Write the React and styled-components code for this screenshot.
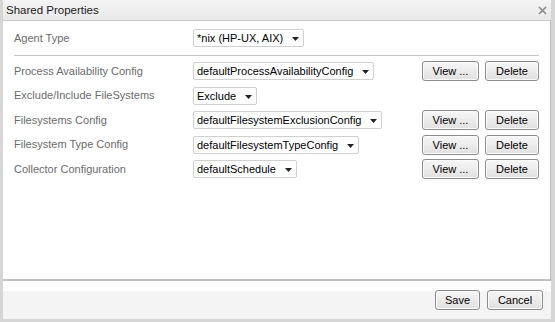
import styled, { createGlobalStyle } from 'styled-components'

const GlobalStyle = createGlobalStyle`
	html, body {
		margin: 0;
		padding: 0;
		background: #ffffff;
	}
	body {
		font-family: "Liberation Sans", Arial, sans-serif;
		font-size: 11px;
	}
`

const rows = [
	{ label: 'Process Availability Config', value: 'defaultProcessAvailabilityConfig', actions: true },
	{ label: 'Exclude/Include FileSystems', value: 'Exclude', actions: false },
	{ label: 'Filesystems Config', value: 'defaultFilesystemExclusionConfig', actions: true },
	{ label: 'Filesystem Type Config', value: 'defaultFilesystemTypeConfig', actions: true },
	{ label: 'Collector Configuration', value: 'defaultSchedule', actions: true },
]

function Combo({ value }) {
	return (
		<SelectBox>
			<span>{value}</span>
			<Arrow viewBox="0 0 7 4" width="7" height="4">
				<path d="M0 0 H7 L3.5 4 Z" fill="#222" />
			</Arrow>
		</SelectBox>
	)
}

function App() {
	return (
		<>
			<GlobalStyle />
			<Window>
				<Header>
					<Title>Shared Properties</Title>
					<Close viewBox="0 0 9 9" width="9" height="9">
						<path d="M1 1 L8 8 M8 1 L1 8" stroke="#8a8a8a" strokeWidth="1.6" />
					</Close>
				</Header>
				<Body>
					<Row>
						<Label>Agent Type</Label>
						<Combo value="*nix (HP-UX, AIX)" />
					</Row>
					<Divider />
					<List>
						{rows.map(r => (
							<Row key={r.label}>
								<Label>{r.label}</Label>
								<Combo value={r.value} />
								{r.actions && (
									<Actions>
										<Button $w={57}>View ...</Button>
										<Button $w={54}>Delete</Button>
									</Actions>
								)}
							</Row>
						))}
					</List>
				</Body>
				<Footer>
					<Button $w={45}>Save</Button>
					<Button $w={56}>Cancel</Button>
				</Footer>
			</Window>
		</>
	)
}
export default App

const Window = styled.div`
	width: 555px;
	height: 322px;
	box-sizing: border-box;
	display: flex;
	flex-direction: column;
	background: #ffffff;
	border-left: 3px solid #d6d6d6;
	border-right: 4px solid #d6d6d6;
	border-bottom: 3px solid #d6d6d6;
	box-shadow: inset -1px 0 0 #b8b8b8;
`
const Header = styled.div`
	height: 21px;
	box-sizing: border-box;
	display: flex;
	align-items: center;
	justify-content: space-between;
	padding: 0 4px 0 3px;
	background: linear-gradient(#f4f4f4, #e9e9e9);
	border-bottom: 1px solid #c9c9c9;
`
const Title = styled.div`
	color: #1a1a1a;
	font-size: 11.5px;
`
const Close = styled.svg`
	display: block;
`
const Body = styled.div`
	flex: 1;
	padding: 7px 11px 0 11px;
	border-bottom: 2px solid #c2c2c2;
	margin-right: 1px;
`
const List = styled.div`
	display: flex;
	flex-direction: column;
	gap: 4.5px;
	padding-top: 5px;
`
const Row = styled.div`
	display: flex;
	align-items: center;
	height: 20px;
`
const Label = styled.div`
	width: 179px;
	color: #6b6b6b;
	font-size: 11px;
	margin-top: -1px;
`
const SelectBox = styled.div`
	height: 18px;
	box-sizing: border-box;
	display: flex;
	align-items: center;
	gap: 9px;
	padding: 0 4px 0 3px;
	border: 1px solid #d0d0d0;
	border-radius: 2px;
	background: #ffffff;
	color: #000000;
	font-size: 11px;
`
const Arrow = styled.svg`
	display: block;
	margin-top: 2px;
`
const Divider = styled.div`
	height: 1px;
	background: #c8c8c8;
	margin-top: 7px;
`
const Actions = styled.div`
	margin-left: auto;
	display: flex;
	gap: 6px;
`
const Button = styled.button`
	width: ${p => p.$w}px;
	height: 20px;
	padding: 0;
	box-sizing: border-box;
	border: 1px solid #8c8c8c;
	border-radius: 3px;
	background: linear-gradient(#f7f7f7, #e0e0e0);
	box-shadow: inset 0 0 0 1px #fbfbfb;
	color: #000000;
	font-family: "Liberation Sans", Arial, sans-serif;
	font-size: 11px;
	cursor: pointer;
`
const Footer = styled.div`
	display: flex;
	justify-content: flex-end;
	align-items: flex-start;
	gap: 7px;
	box-sizing: border-box;
	height: 38px;
	padding: 9px 8px 0 0;
	background: linear-gradient(#ffffff 0 10px, #f4f4f4 10px);
`
